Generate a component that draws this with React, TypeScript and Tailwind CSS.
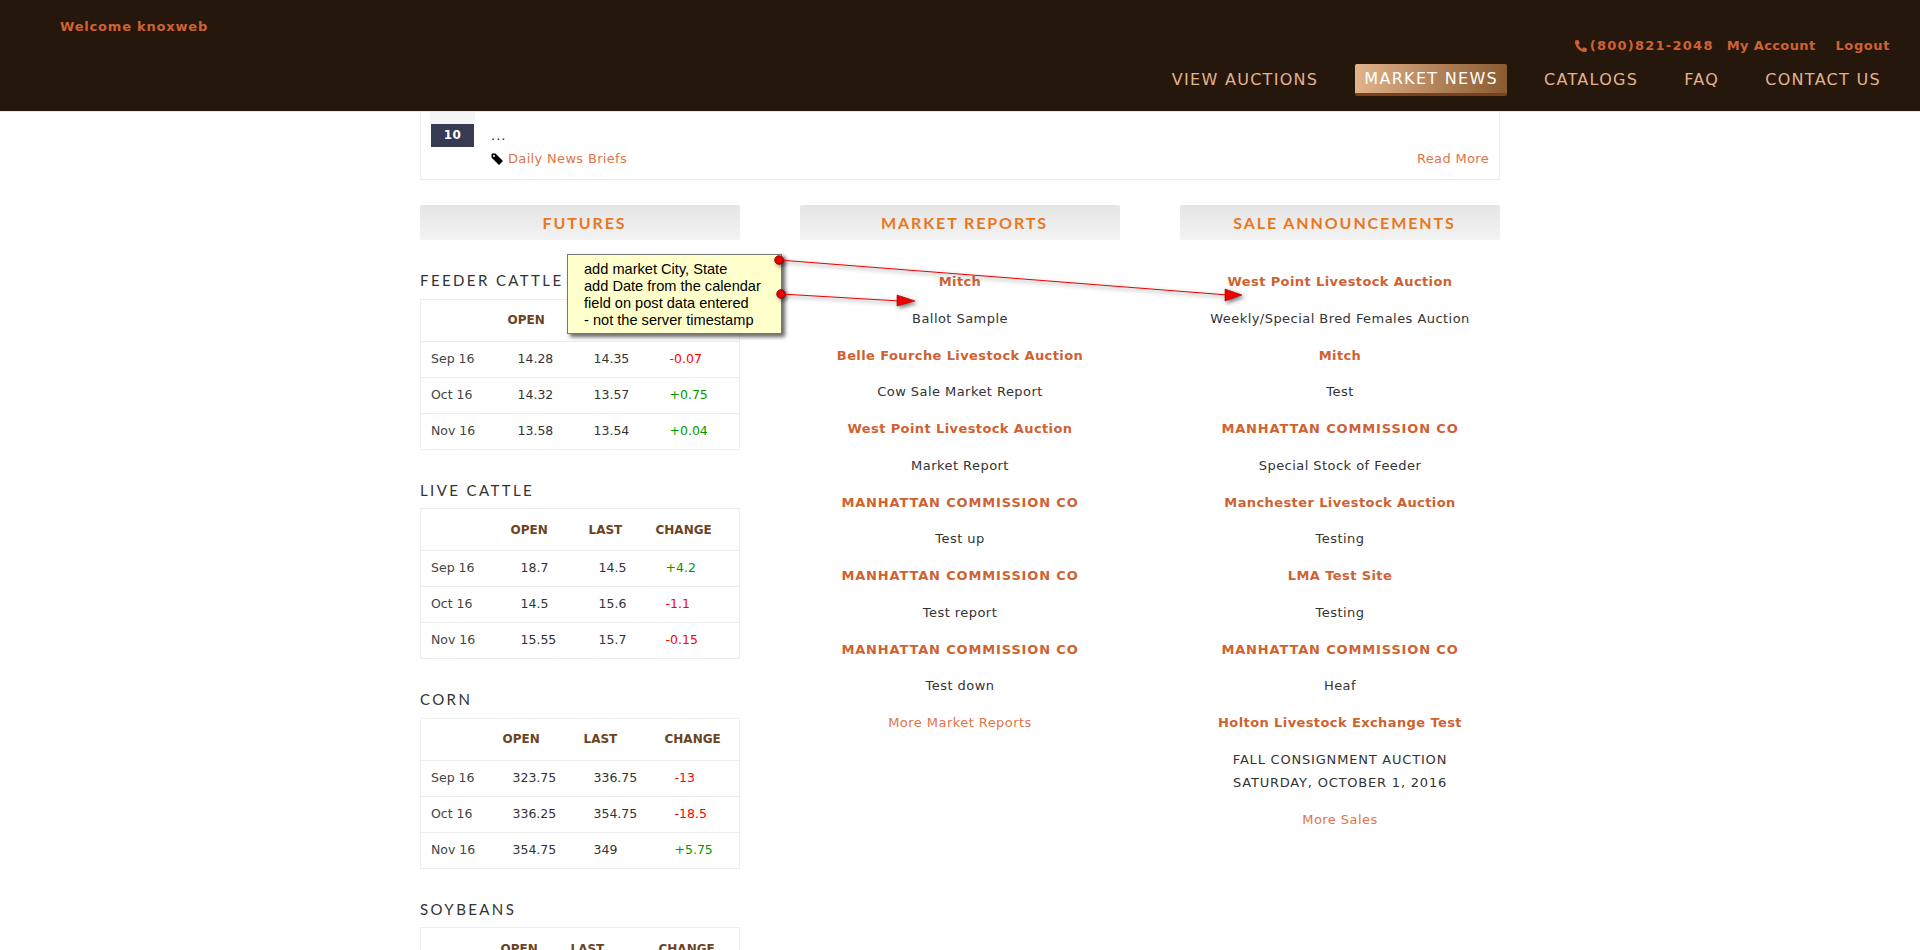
import React from "react";
import { FaPhoneAlt } from "react-icons/fa";

type Row = [string, string, string, string];
type Market = { name: string; cols: [string, string, string]; rows: Row[] };

const markets: Market[] = [
  {
    name: "FEEDER CATTLE",
    cols: ["w-[87px]", "w-[76px]", "w-[76px]"],
    rows: [
      ["Sep 16", "14.28", "14.35", "-0.07"],
      ["Oct 16", "14.32", "13.57", "+0.75"],
      ["Nov 16", "13.58", "13.54", "+0.04"],
    ],
  },
  {
    name: "LIVE CATTLE",
    cols: ["w-[90px]", "w-[78px]", "w-[67px]"],
    rows: [
      ["Sep 16", "18.7", "14.5", "+4.2"],
      ["Oct 16", "14.5", "15.6", "-1.1"],
      ["Nov 16", "15.55", "15.7", "-0.15"],
    ],
  },
  {
    name: "CORN",
    cols: ["w-[82px]", "w-[81px]", "w-[81px]"],
    rows: [
      ["Sep 16", "323.75", "336.75", "-13"],
      ["Oct 16", "336.25", "354.75", "-18.5"],
      ["Nov 16", "354.75", "349", "+5.75"],
    ],
  },
  {
    name: "SOYBEANS",
    cols: ["w-[80px]", "w-[70px]", "w-[88px]"],
    rows: [
      ["Sep 16", "971", "969", "-2"],
      ["Oct 16", "969", "955", "-14"],
      ["Nov 16", "955", "960", "+5"],
    ],
  },
];

const reports: [string, string][] = [
  ["Mitch", "Ballot Sample"],
  ["Belle Fourche Livestock Auction", "Cow Sale Market Report"],
  ["West Point Livestock Auction", "Market Report"],
  ["MANHATTAN COMMISSION CO", "Test up"],
  ["MANHATTAN COMMISSION CO", "Test report"],
  ["MANHATTAN COMMISSION CO", "Test down"],
];

const sales: [string, string][] = [
  ["West Point Livestock Auction", "Weekly/Special Bred Females Auction"],
  ["Mitch", "Test"],
  ["MANHATTAN COMMISSION CO", "Special Stock of Feeder"],
  ["Manchester Livestock Auction", "Testing"],
  ["LMA Test Site", "Testing"],
  ["MANHATTAN COMMISSION CO", "Heaf"],
];

function Heading({ children }: { children: React.ReactNode }) {
  return (
    <div className="h-[35px] rounded-[2px] bg-gradient-to-b from-[#e5e5e5] to-[#f3f3f3] pl-[9px] text-center font-['Lato',sans-serif] text-[16px] leading-[36px] font-bold tracking-[1.9px] text-[#e8781e]">
      {children}
    </div>
  );
}

function MarketTable({ m }: { m: Market }) {
  return (
    <div className="mb-[30px]">
      <div className="mb-[8.5px] h-[20px] font-['Lato',sans-serif] text-[15px] leading-[20px] tracking-[2.4px] text-[#333]">
        {m.name}
      </div>
      <table className="w-[320px] table-fixed border-collapse border border-[#eeeeee] text-[12.5px] whitespace-nowrap">
        <thead>
          <tr className="h-[42px] border-b border-[#eeeeee] text-left text-[12px] font-bold text-[#6b4423]">
            <th className={m.cols[0]}></th>
            <th className={m.cols[1]}>OPEN</th>
            <th className={m.cols[2]}>LAST</th>
            <th>CHANGE</th>
          </tr>
        </thead>
        <tbody>
          {m.rows.map((r) => (
            <tr key={r[0]} className="h-[36px] border-b border-[#eeeeee] text-[#333]">
              <td className="pl-[10px] text-[#444]">{r[0]}</td>
              <td className="pl-[10px]">{r[1]}</td>
              <td className="pl-[10px]">{r[2]}</td>
              <td className={r[3].startsWith("-") ? "pl-[10px] text-[#ff0000]" : "pl-[10px] text-[#009900]"}>{r[3]}</td>
            </tr>
          ))}
        </tbody>
      </table>
    </div>
  );
}

function Entry({ title, text, caps }: { title: string; text: React.ReactNode; caps?: boolean }) {
  return (
    <>
      <div
        className={
          title === title.toUpperCase()
            ? "mb-[13.75px] text-[13px] leading-[23px] font-bold tracking-[0.85px] text-[#cf6231]"
            : "mb-[13.75px] text-[13px] leading-[23px] font-bold tracking-[0.4px] text-[#cf6231]"
        }
      >
        {title}
      </div>
      <div
        className={
          caps
            ? "mb-[13.75px] text-[13px] leading-[23px] tracking-[0.8px] text-[#333]"
            : "mb-[13.75px] text-[13px] leading-[23px] tracking-[0.45px] text-[#333]"
        }
      >
        {text}
      </div>
    </>
  );
}

function NavLink({ children }: { children: React.ReactNode }) {
  return <a className="px-[9px] tracking-[1.3px] text-[#e2b48c]">{children}</a>;
}

function TagIcon() {
  return (
    <svg viewBox="0 0 12 12" className="mr-[5px] h-[12px] w-[12px]">
      <path
        fillRule="evenodd"
        fill="#000"
        d="M0.5 1.5 Q0.5 0.5 1.5 0.5 H4.5 L11.5 7.5 Q12 8 11.5 8.5 L8.5 11.5 Q8 12 7.5 11.5 L0.5 4.5 Z M3 2 A1 1 0 1 0 3 4 A1 1 0 1 0 3 2 Z"
      />
    </svg>
  );
}

export default function App() {
  return (
    <div className="relative h-[950px] overflow-hidden bg-white font-['DejaVu_Sans',Verdana,sans-serif]">
      <header className="relative flex h-[111px] items-start justify-between bg-[#26170d] shadow-[0_1px_0_#e8e8e8]">
        <div className="pt-[18px] pl-[60px] text-[13px] leading-[18px] font-bold tracking-[0.8px] text-[#cf6231]">Welcome knoxweb</div>
        <div className="flex flex-col items-end pr-[30px]">
          <div className="flex items-center pt-[36px] text-[13px] leading-[20px] font-bold text-[#cf6231]">
            <FaPhoneAlt className="mr-[3px] h-[12px] w-[12px]" />
            <span className="tracking-[1.25px]">(800)821-2048</span>
            <span className="ml-[13px] tracking-[0.37px]">My Account</span>
            <span className="ml-[20px] tracking-[0.6px]">Logout</span>
          </div>
          <nav className="mt-[8px] flex items-center gap-[28px] text-[16px] leading-[32px]">
            <NavLink>VIEW AUCTIONS</NavLink>
            <a className="h-[32px] rounded-[2px] border-b-[3px] border-[#7a4020] bg-gradient-to-r from-[#e2b48c] to-[#8a5a30] px-[9px] leading-[30px] font-medium tracking-[1.3px] text-white">
              MARKET NEWS
            </a>
            <NavLink>CATALOGS</NavLink>
            <NavLink>FAQ</NavLink>
            <NavLink>CONTACT US</NavLink>
          </nav>
        </div>
      </header>

      <main className="mx-auto w-[1080px]">
        <section className="flex h-[69px] border-r border-b border-l border-[#eeeeee] text-[13px]">
          <div className="ml-[9px] w-[45px]">
            <div className="h-[13px] bg-[#f5f5f5]"></div>
            <div className="mx-[1px] h-[23px] bg-[#363a52] text-center text-[12px] leading-[23px] font-bold tracking-[0.5px] text-white">10</div>
          </div>
          <div className="flex flex-1 flex-col pr-[10px] pl-[16px]">
            <div className="pt-[13px] leading-[24px] tracking-[1px] text-[#222]">...</div>
            <div className="flex items-center justify-between leading-[22px] tracking-[0.33px] text-[#e0744a]">
              <span className="flex items-center">
                <TagIcon />
                Daily News Briefs
              </span>
              <span>Read More</span>
            </div>
          </div>
        </section>

        <div className="mt-[25px] grid grid-cols-[320px_320px_320px] gap-[60px]">
          <div>
            <Heading>FUTURES</Heading>
            <div className="pt-[30px]">
              {markets.map((m) => (
                <MarketTable key={m.name} m={m} />
              ))}
            </div>
          </div>
          <div>
            <Heading>MARKET REPORTS</Heading>
            <div className="pt-[30px] text-center">
              {reports.map(([a, b], i) => (
                <Entry key={i} title={a} text={b} />
              ))}
              <div className="text-[13px] leading-[23px] tracking-[0.45px] text-[#e0744a]">More Market Reports</div>
            </div>
          </div>
          <div>
            <Heading>SALE ANNOUNCEMENTS</Heading>
            <div className="pt-[30px] text-center">
              {sales.map(([a, b], i) => (
                <Entry key={i} title={a} text={b} />
              ))}
              <Entry
                caps
                title="Holton Livestock Exchange Test"
                text={
                  <>
                    FALL CONSIGNMENT AUCTION
                    <br />
                    SATURDAY, OCTOBER 1, 2016
                  </>
                }
              />
              <div className="text-[13px] leading-[23px] tracking-[0.45px] text-[#e0744a]">More Sales</div>
            </div>
          </div>
        </div>
      </main>

      <div className="absolute top-[254px] left-[567px] h-[80px] w-[215px] border border-[#777] bg-[#ffffcc] pt-[6px] pl-[16px] font-['Liberation_Sans',Arial,sans-serif] text-[14.6px] leading-[17px] text-black shadow-[3px_3px_4px_rgba(0,0,0,0.6)]">
        add market City, State
        <br />
        add Date from the calendar
        <br />
        field on post data entered
        <br />- not the server timestamp
      </div>

      <svg className="pointer-events-none absolute top-0 left-0 h-[950px] w-[1920px]" viewBox="0 0 1920 950">
        <g className="drop-shadow-[2px_2px_2px_rgba(0,0,0,0.55)]">
          <line x1="779" y1="260" x2="1228" y2="295" stroke="#ee0000" strokeWidth="1.2" />
          <line x1="781" y1="294" x2="900" y2="301" stroke="#ee0000" strokeWidth="1.2" />
          <path d="M1225 289 L1242 295 L1225 301 Z" fill="#ee0000" stroke="#aa0000" strokeWidth="0.6" />
          <path d="M897 295 L915 301 L897 306 Z" fill="#ee0000" stroke="#aa0000" strokeWidth="0.6" />
          <circle cx="779" cy="260" r="4.3" fill="#ee0000" stroke="#770000" strokeWidth="0.8" />
          <circle cx="781" cy="294" r="4.3" fill="#ee0000" stroke="#770000" strokeWidth="0.8" />
        </g>
      </svg>
    </div>
  );
}
